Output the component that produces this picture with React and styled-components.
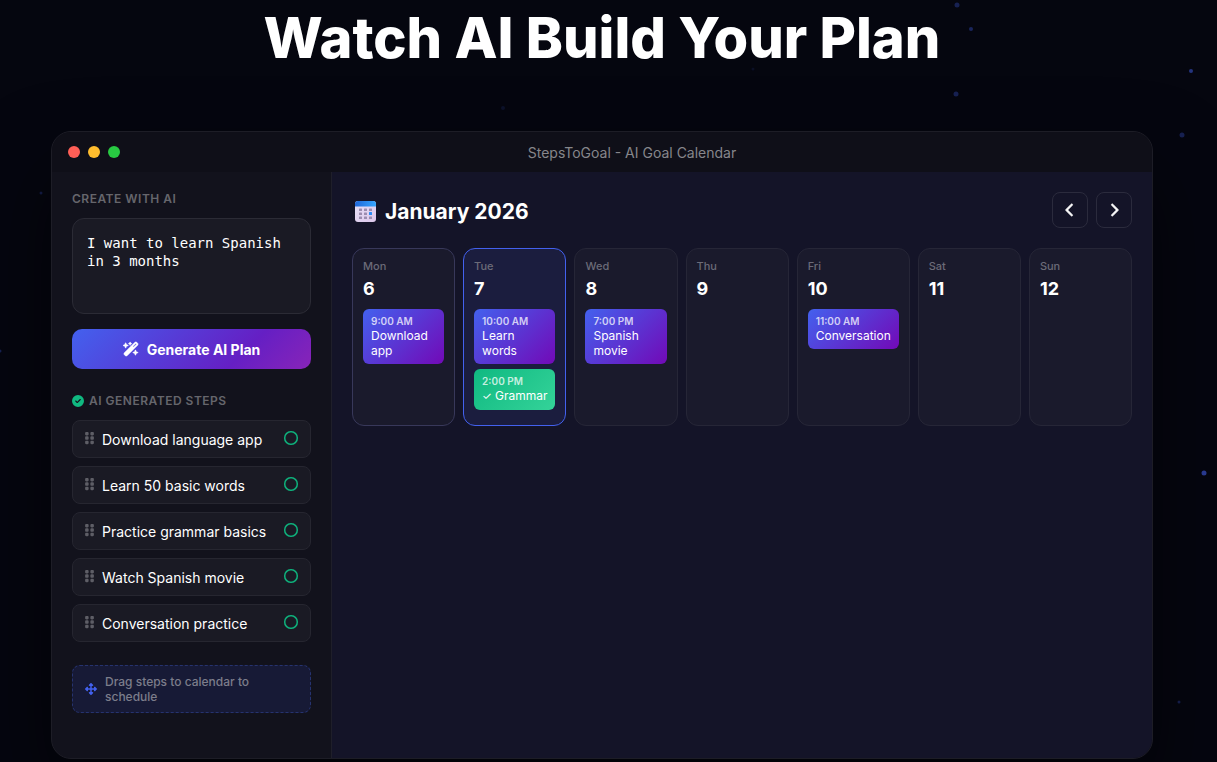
import React from 'react';
import styled, { createGlobalStyle } from 'styled-components';
import {
  FaWandMagicSparkles,
  FaCircleCheck,
  FaGripVertical,
  FaRegCircle,
  FaChevronLeft,
  FaChevronRight,
  FaUpDownLeftRight,
} from 'react-icons/fa6';

const GlobalStyle = createGlobalStyle`
  *, *::before, *::after {
    box-sizing: border-box;
  }

  body {
    margin: 0;
    background-color: #05060f;
    color: #fff;
    font-family: Inter, "Liberation Sans", sans-serif;
    overflow: hidden;
  }
`;

const Page = styled.main`
  position: relative;
  padding: 4px 64px 4px 51px;
`;

const Stars = styled.svg`
  position: absolute;
  top: 0;
  left: 0;
  width: 100%;
  height: 100%;
  fill: #4361ee;
`;

const Title = styled.h1`
  position: relative;
  margin: 0 0 59px;
  font-size: 56px;
  line-height: 68px;
  font-weight: 800;
  text-align: center;
`;

const Window = styled.section`
  position: relative;
  max-width: 1102px;
  margin: 0 auto;
  border: 1px solid #1d1d26;
  border-radius: 20px;
  overflow: hidden;
  background-color: #12121c;
  box-shadow: 0 40px 80px rgba(0, 0, 0, 0.5);
`;

const TitleBar = styled.header`
  display: flex;
  align-items: center;
  gap: 8px;
  height: 40px;
  padding: 0 16px;
  background-color: #0f0f18;
`;

const Dot = styled.span`
  width: 12px;
  height: 12px;
  border-radius: 50%;
  background-color: ${({ color }) => color};
`;

const WindowName = styled.span`
  flex: 1;
  text-align: center;
  font-size: 14px;
  font-weight: 400;
  color: #86868b;
`;

const Body = styled.div`
  display: flex;
  min-height: 586px;
`;

const Sidebar = styled.aside`
  flex: 0 0 280px;
  padding: 19px 20px 20px;
  border-right: 1px solid #1f1f2a;
`;

const Caption = styled.label`
  display: flex;
  align-items: center;
  gap: 5px;
  margin: 0 0 12px;
  font-size: 12px;
  line-height: 15px;
  font-weight: 600;
  letter-spacing: 0.5px;
  text-transform: uppercase;
  color: #66666c;

  svg {
    color: #10b981;
  }
`;

const Prompt = styled.textarea`
  display: block;
  width: 100%;
  height: 96px;
  margin-bottom: 15px;
  padding: 15px 14px;
  border: 1px solid #2b2b35;
  border-radius: 12px;
  background-color: #1a1a24;
  color: #fff;
  font-family: "DejaVu Sans Mono", monospace;
  font-size: 14px;
  line-height: 18px;
  resize: none;
`;

const Generate = styled.button`
  display: flex;
  align-items: center;
  justify-content: center;
  gap: 8px;
  width: 100%;
  height: 40px;
  margin-bottom: 24px;
  padding: 0;
  border: 0;
  border-radius: 10px;
  background: linear-gradient(135deg, #4361ee 0%, #651fc4 70%, #8824b8 100%);
  color: #fff;
  font-family: inherit;
  font-size: 14px;
  font-weight: 700;
`;

const Steps = styled.ul`
  display: flex;
  flex-direction: column;
  gap: 8px;
  margin: 0 0 23px;
  padding: 0;
  list-style: none;
`;

const Step = styled.li`
  display: flex;
  align-items: center;
  gap: 8px;
  height: 38px;
  padding: 0 12px;
  border: 1px solid #262630;
  border-radius: 8px;
  background-color: #1a1a24;
  font-size: 14px;
  font-weight: 400;
  color: #fff;

  svg {
    flex: none;
    margin-bottom: 2px;
  }
`;

const Grip = styled(FaGripVertical)`
  width: 9px;
  height: 14px;
  color: #5e5e66;
`;

const StepName = styled.span`
  flex: 1;
`;

const Status = styled(FaRegCircle)`
  color: #10b981;
`;

const Hint = styled.p`
  display: flex;
  align-items: center;
  gap: 8px;
  margin: 0;
  padding: 8px 12px;
  border: 1px dashed #26336f;
  border-radius: 8px;
  background-color: #171a36;
  font-size: 12px;
  line-height: 15px;
  font-weight: 500;
  color: #7c7d8b;

  svg {
    flex: none;
    color: #4361ee;
  }
`;

const Calendar = styled.div`
  flex: 1;
  min-width: 0;
  padding: 20px;
  background-color: #141428;
`;

const CalendarHeader = styled.div`
  display: flex;
  align-items: center;
  justify-content: space-between;
  margin-bottom: 20px;
`;

const Month = styled.h2`
  display: flex;
  align-items: center;
  gap: 7px;
  margin: 0;
  padding-top: 2px;
  font-size: 21px;
  font-weight: 700;
`;

const Nav = styled.div`
  display: flex;
  gap: 8px;
`;

const NavButton = styled.button`
  display: flex;
  align-items: center;
  justify-content: center;
  width: 36px;
  height: 36px;
  padding: 0;
  border: 1px solid #2b2b3d;
  border-radius: 8px;
  background-color: transparent;
  color: #fff;
  font-size: 14px;
`;

const Week = styled.div`
  display: grid;
  grid-template-columns: repeat(7, 1fr);
  gap: 8px;
`;

const borders = {
  past: '#38385a',
  today: '#4361ee',
};

const Day = styled.article`
  min-height: 178px;
  padding: 10px;
  border: 1px solid ${({ $state }) => borders[$state] || '#262637'};
  border-radius: 12px;
  background-color: ${({ $state }) => ($state === 'today' ? '#1b1d3e' : '#1a1a2c')};
`;

const DayName = styled.div`
  font-size: 11px;
  line-height: 14px;
  font-weight: 500;
  color: #6b6b78;
`;

const DayNumber = styled.div`
  margin: 5px 0 9px;
  font-size: 18px;
  line-height: 22px;
  font-weight: 700;
`;

const Events = styled.div`
  display: flex;
  flex-direction: column;
  gap: 5px;
`;

const Event = styled.div`
  padding: 6px 8px;
  border-radius: 6px;
  background: ${({ $done }) => ($done
    ? 'linear-gradient(135deg, #10b981, #34d399)'
    : 'linear-gradient(135deg, #4361ee, #7209b7)')};
  font-size: 12px;
  line-height: 15px;
  white-space: ${({ $done }) => ($done ? 'nowrap' : 'normal')};
`;

const Time = styled.div`
  font-size: 10px;
  line-height: 13px;
  font-weight: 600;
  color: rgba(255, 255, 255, 0.75);
`;

const Check = styled.span`
  font-size: 11px;
`;

const CalendarIcon = () => (
  <svg width="26" height="26" viewBox="0 0 26 26" aria-hidden="true">
    <defs>
      <linearGradient id="sheet" x1="0" y1="0" x2="1" y2="1">
        <stop offset="0" stopColor="#e6e0f6" />
        <stop offset="1" stopColor="#dcc6ea" />
      </linearGradient>
      <linearGradient id="top" x1="0" y1="0" x2="1" y2="0">
        <stop offset="0" stopColor="#2067d8" />
        <stop offset="1" stopColor="#35a6ff" />
      </linearGradient>
    </defs>
    <rect x="3" y="3" width="21" height="21" rx="3" fill="url(#sheet)" />
    <path d="M3 8.5V6a3 3 0 0 1 3-3h15a3 3 0 0 1 3 3v2.500z" fill="url(#top)" />
    <g fill="#9a8caf">
      <rect x="7" y="10.500" width="3" height="2.500" rx="0.500" />
      <rect x="12" y="10.500" width="3" height="2.500" rx="0.500" />
      <rect x="17" y="10.500" width="3" height="2.500" rx="0.500" />
      <rect x="7" y="14.500" width="3" height="2.500" rx="0.500" />
      <rect x="12" y="14.500" width="3" height="2.500" rx="0.500" />
      <rect x="7" y="18.500" width="3" height="2.500" rx="0.500" />
      <rect x="12" y="18.500" width="3" height="2.500" rx="0.500" />
      <rect x="17" y="18.500" width="3" height="2.500" rx="0.500" />
    </g>
    <rect x="17" y="14" width="3" height="3" rx="0.500" fill="#2b8cf5" />
  </svg>
);

const stars = [
  { x: 957, y: 5, r: 2.5, o: 0.3 },
  { x: 971, y: 29, r: 2, o: 0.35 },
  { x: 1191, y: 71, r: 2, o: 0.5 },
  { x: 956, y: 94, r: 2.5, o: 0.3 },
  { x: 1182, y: 135, r: 2.5, o: 0.3 },
  { x: 503, y: 108, r: 2, o: 0.12 },
  { x: 753, y: 69, r: 1.5, o: 0.1 },
  { x: 41, y: 193, r: 1.5, o: 0.25 },
  { x: 0, y: 351, r: 1.5, o: 0.3 },
  { x: 1204, y: 473, r: 2.5, o: 0.6 },
  { x: 1179, y: 702, r: 1.5, o: 0.3 },
];

const steps = [
  'Download language app',
  'Learn 50 basic words',
  'Practice grammar basics',
  'Watch Spanish movie',
  'Conversation practice',
];

const days = [
  { name: 'Mon', number: 6, state: 'past', events: [{ time: '9:00 AM', title: 'Download app' }] },
  {
    name: 'Tue',
    number: 7,
    state: 'today',
    events: [
      { time: '10:00 AM', title: 'Learn words' },
      { time: '2:00 PM', title: 'Grammar', done: true },
    ],
  },
  { name: 'Wed', number: 8, events: [{ time: '7:00 PM', title: 'Spanish movie' }] },
  { name: 'Thu', number: 9, events: [] },
  { name: 'Fri', number: 10, events: [{ time: '11:00 AM', title: 'Conversation' }] },
  { name: 'Sat', number: 11, events: [] },
  { name: 'Sun', number: 12, events: [] },
];

const App = () => (
  <>
    <GlobalStyle />
    <Page>
      <Stars aria-hidden="true">
        {stars.map(({ x, y, r, o }) => (
          <circle key={`${x}-${y}`} cx={x} cy={y} r={r} opacity={o} />
        ))}
      </Stars>
      <Title>Watch AI Build Your Plan</Title>
      <Window>
        <TitleBar>
          <Dot color="#ff5f57" />
          <Dot color="#ffbd2e" />
          <Dot color="#28ca42" />
          <WindowName>StepsToGoal - AI Goal Calendar</WindowName>
        </TitleBar>
        <Body>
          <Sidebar>
            <Caption htmlFor="goal">Create with AI</Caption>
            <Prompt id="goal" defaultValue="I want to learn Spanish in 3 months" spellCheck={false} />
            <Generate type="button">
              <FaWandMagicSparkles size={16} strokeWidth={16} />
              Generate AI Plan
            </Generate>
            <Caption as="h3">
              <FaCircleCheck size={12} />
              AI Generated Steps
            </Caption>
            <Steps>
              {steps.map(step => (
                <Step key={step}>
                  <Grip />
                  <StepName>{step}</StepName>
                  <Status size={14} strokeWidth={8} />
                </Step>
              ))}
            </Steps>
            <Hint>
              <FaUpDownLeftRight size={12} />
              Drag steps to calendar to schedule
            </Hint>
          </Sidebar>
          <Calendar>
            <CalendarHeader>
              <Month>
                <CalendarIcon />
                January 2026
              </Month>
              <Nav>
                <NavButton type="button" aria-label="Previous week">
                  <FaChevronLeft strokeWidth={24} />
                </NavButton>
                <NavButton type="button" aria-label="Next week">
                  <FaChevronRight strokeWidth={24} />
                </NavButton>
              </Nav>
            </CalendarHeader>
            <Week>
              {days.map(({ name, number, state, events }) => (
                <Day key={name} $state={state}>
                  <DayName>{name}</DayName>
                  <DayNumber>{number}</DayNumber>
                  <Events>
                    {events.map(({ time, title, done }) => (
                      <Event key={time} $done={done}>
                        <Time>{time}</Time>
                        {done && <Check>✓ </Check>}
                        {title}
                      </Event>
                    ))}
                  </Events>
                </Day>
              ))}
            </Week>
          </Calendar>
        </Body>
      </Window>
    </Page>
  </>
);

export default App;
